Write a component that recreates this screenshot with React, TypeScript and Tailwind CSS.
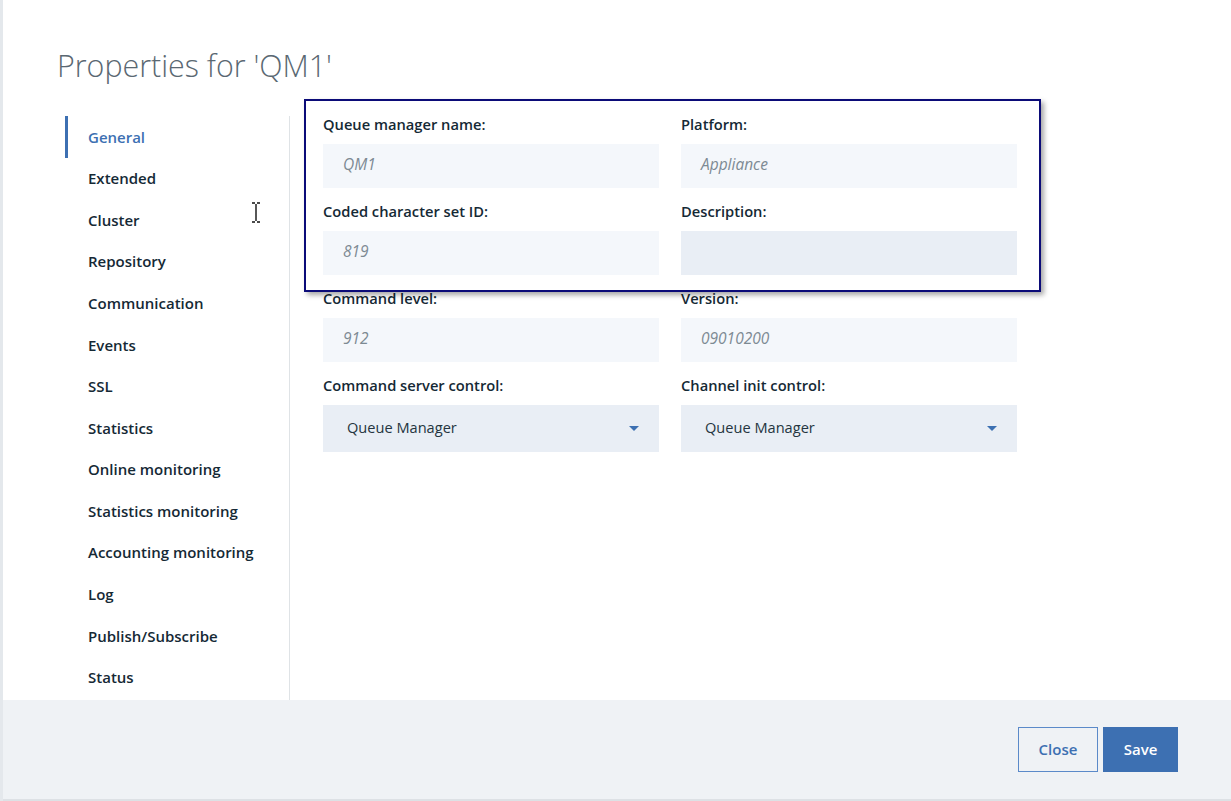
import React from "react";

const navItems = [
    "General",
    "Extended",
    "Cluster",
    "Repository",
    "Communication",
    "Events",
    "SSL",
    "Statistics",
    "Online monitoring",
    "Statistics monitoring",
    "Accounting monitoring",
    "Log",
    "Publish/Subscribe",
    "Status",
];

const ReadField: React.FC<{ label: string; value?: string; editable?: boolean }> = ({ label, value, editable }) => {
    return (
        <div className="flex flex-col">
            <label className="text-[14.7px] leading-[20px] font-semibold text-[#152935]">{label}</label>
            <div
                className={
                    "mt-[10px] h-[44px] flex items-center pl-[20px] pb-[2px] text-[15.5px] italic text-[#7d8a93] " +
                    (editable ? "bg-[#e9eef5]" : "bg-[#f4f7fb]")
                }
            >
                {value}
            </div>
        </div>
    );
};

const SelectField: React.FC<{ label: string; value: string }> = ({ label, value }) => {
    return (
        <div className="flex flex-col">
            <label className="text-[14.7px] leading-[20px] font-semibold text-[#152935]">{label}</label>
            <div className="mt-[10px] h-[47px] flex items-center justify-between pl-[24px] pr-[20px] bg-[#e9eef5] text-[14.6px] text-[#253540]">
                <span className="pb-[2px]">{value}</span>
                <svg width="10" height="5" viewBox="0 0 10 5">
                    <path d="M0 0 L10 0 L5 5 Z" fill="#3d70b2" />
                </svg>
            </div>
        </div>
    );
};

const App: React.FC = () => {
    return (
        <div
            className="relative w-[1231px] h-[801px] flex bg-white overflow-hidden"
            style={{ fontFamily: "'Open Sans', 'Liberation Sans', sans-serif" }}
        >
            {/* strip of the page behind the dialog */}
            <div className="w-[3px] bg-[#e4e8ec]" />

            <div className="flex-1 flex flex-col">
                <div className="flex-1 flex flex-col">
                    <h1 className="mt-[46px] ml-[54px] h-[40px] leading-[40px] text-[30.4px] font-light text-[#5a6872]">
                        Properties for 'QM1'
                    </h1>

                    <div className="mt-[28px] flex flex-1">
                        {/* side nav */}
                        <div className="w-[287px] mt-[2px] border-r border-[#dfe3e6] pl-[62px]">
                            {navItems.map((item, i) => (
                                <div
                                    key={item}
                                    className={
                                        "h-[41.6px] flex items-center text-[15px] font-semibold " +
                                        (i === 0
                                            ? "border-l-[3px] border-[#3d70b2] pl-[20px] text-[#3d70b2]"
                                            : "pl-[23px] text-[#152935]")
                                    }
                                >
                                    {item}
                                </div>
                            ))}
                        </div>

                        {/* form */}
                        <div className="pl-[33px]">
                            <div className="grid grid-cols-[336px_336px] gap-x-[22px] gap-y-[13px]">
                                <ReadField label="Queue manager name:" value="QM1" />
                                <ReadField label="Platform:" value="Appliance" />
                                <ReadField label="Coded character set ID:" value="819" />
                                <ReadField label="Description:" editable />
                                <ReadField label="Command level:" value="912" />
                                <ReadField label="Version:" value="09010200" />
                                <SelectField label="Command server control:" value="Queue Manager" />
                                <SelectField label="Channel init control:" value="Queue Manager" />
                            </div>
                        </div>
                    </div>
                </div>

                {/* footer */}
                <div className="h-[101px] bg-[#eff2f5] border-b-2 border-[#dde1e5] flex justify-end items-center gap-[5px] pr-[53px]">
                    <button className="w-[80px] h-[45px] border border-[#5b8ac9] text-[#3d70b2] text-[15px] font-semibold bg-transparent">
                        Close
                    </button>
                    <button className="w-[75px] h-[45px] bg-[#3d70b2] text-white text-[15px] font-semibold">
                        Save
                    </button>
                </div>
            </div>

            {/* annotation highlight over the first two rows */}
            <div className="absolute left-[304px] top-[99px] w-[737px] h-[193px] border-2 border-[#0b0b78] shadow-[3px_3px_5px_rgba(0,0,0,0.35)] pointer-events-none" />

            {/* text cursor */}
            <svg className="absolute left-[251px] top-[202px]" width="10" height="21" viewBox="0 0 10 21">
                <path d="M1 1 H4 M6 1 H9 M5 2 V19 M1 20 H4 M6 20 H9" stroke="#111" strokeWidth="1.4" fill="none" />
            </svg>
        </div>
    );
};

export default App;
